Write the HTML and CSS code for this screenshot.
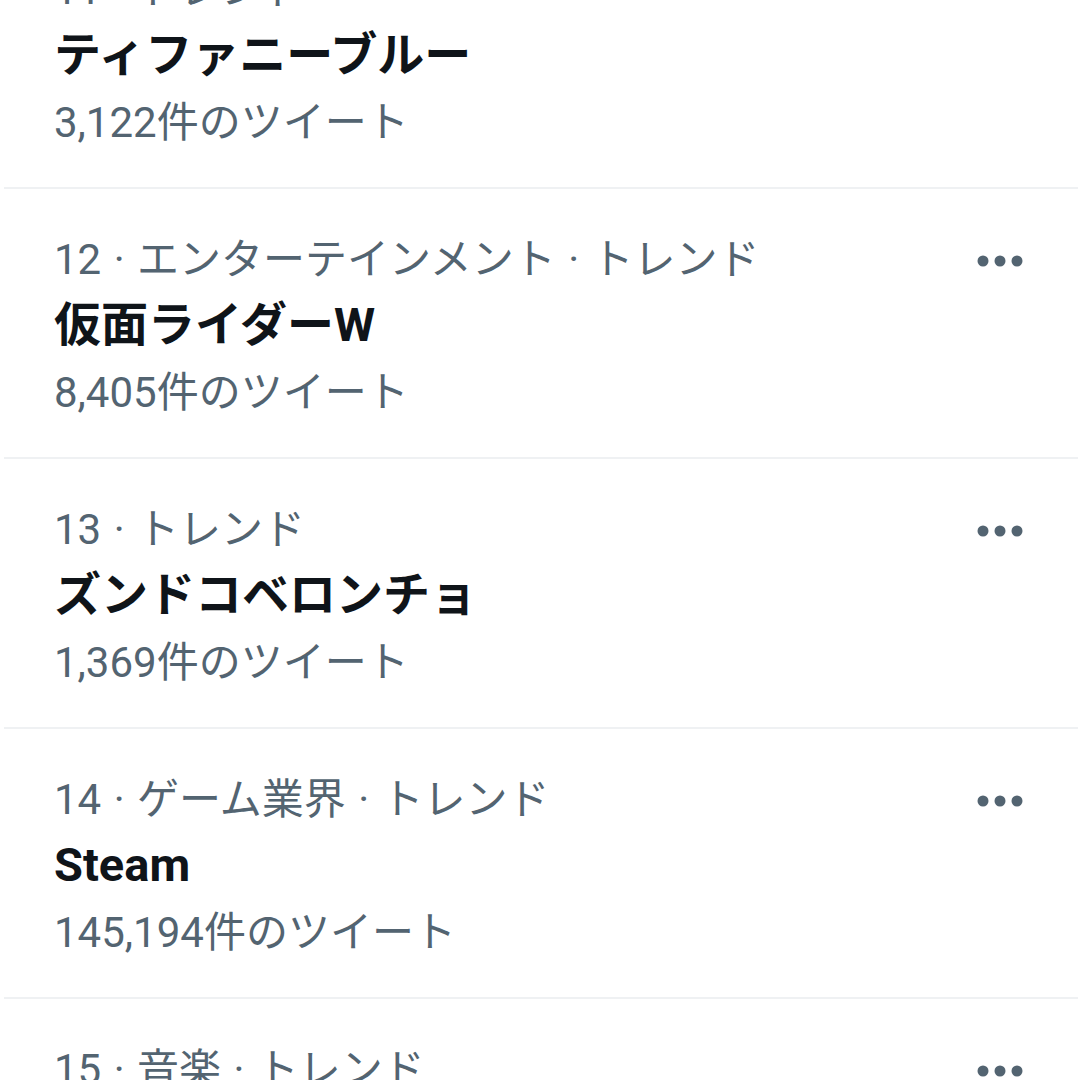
FILE: index.html
```html
<!DOCTYPE html>
<html lang="ja">
<head>
    <meta charset="UTF-8">
    <meta name="viewport" content="width=device-width, initial-scale=1.0">
    <title>トレンド</title>
    <link rel="stylesheet" href="styles.css">
</head>
<body>
    <div class="trend-list">
        <div class="trend">
            <div class="trend-text">
                <div class="trend-meta">11 · トレンド</div>
                <div class="trend-name">ティファニーブルー</div>
                <div class="trend-count">3,122件のツイート</div>
            </div>
            <div class="trend-more">
                <svg width="46" height="12" viewBox="0 0 46 12"><circle cx="6" cy="6" r="5.5"/><circle cx="23" cy="6" r="5.5"/><circle cx="40" cy="6" r="5.5"/></svg>
            </div>
        </div>
        <div class="trend">
            <div class="trend-text">
                <div class="trend-meta">12 · エンターテインメント · トレンド</div>
                <div class="trend-name">仮面ライダーW</div>
                <div class="trend-count">8,405件のツイート</div>
            </div>
            <div class="trend-more">
                <svg width="46" height="12" viewBox="0 0 46 12"><circle cx="6" cy="6" r="5.5"/><circle cx="23" cy="6" r="5.5"/><circle cx="40" cy="6" r="5.5"/></svg>
            </div>
        </div>
        <div class="trend">
            <div class="trend-text">
                <div class="trend-meta">13 · トレンド</div>
                <div class="trend-name">ズンドコベロンチョ</div>
                <div class="trend-count">1,369件のツイート</div>
            </div>
            <div class="trend-more">
                <svg width="46" height="12" viewBox="0 0 46 12"><circle cx="6" cy="6" r="5.5"/><circle cx="23" cy="6" r="5.5"/><circle cx="40" cy="6" r="5.5"/></svg>
            </div>
        </div>
        <div class="trend">
            <div class="trend-text">
                <div class="trend-meta">14 · ゲーム業界 · トレンド</div>
                <div class="trend-name">Steam</div>
                <div class="trend-count">145,194件のツイート</div>
            </div>
            <div class="trend-more">
                <svg width="46" height="12" viewBox="0 0 46 12"><circle cx="6" cy="6" r="5.5"/><circle cx="23" cy="6" r="5.5"/><circle cx="40" cy="6" r="5.5"/></svg>
            </div>
        </div>
        <div class="trend">
            <div class="trend-text">
                <div class="trend-meta">15 · 音楽 · トレンド</div>
                <div class="trend-name">&nbsp;</div>
                <div class="trend-count">&nbsp;</div>
            </div>
            <div class="trend-more">
                <svg width="46" height="12" viewBox="0 0 46 12"><circle cx="6" cy="6" r="5.5"/><circle cx="23" cy="6" r="5.5"/><circle cx="40" cy="6" r="5.5"/></svg>
            </div>
        </div>
    </div>
</body>
</html>
```

FILE: styles.css
```css
*{
    box-sizing: border-box;
}
body{
    margin: 0;
    background-color: #fff;
    font-family: Roboto, "Noto Sans CJK JP", sans-serif;
    height: 100vh;
    overflow: hidden;
}
.trend-list{
    margin-top: -81px;
}
.trend{
    display: flex;
    align-items: flex-start;
    padding: 40px 55px 30px 50px;
    margin: 0 2px 0 4px;
    border-bottom: 2px solid #eff1f3;
}
.trend-text{
    flex: 1;
}
.trend-meta{
    font-size: 42px;
    line-height: 62px;
    word-spacing: 2px;
    color: #536471;
}
.trend-name{
    font-size: 47px;
    line-height: 68px;
    font-weight: 700;
    color: #0f1419;
}
.trend-count{
    font-size: 42px;
    line-height: 68px;
    color: #536471;
}
.trend-more{
    display: flex;
    align-items: center;
    height: 64px;
}
.trend-more svg{
    fill: #536471;
}
```
